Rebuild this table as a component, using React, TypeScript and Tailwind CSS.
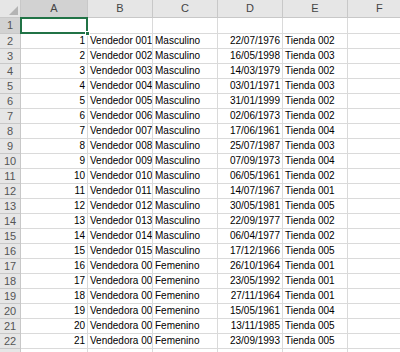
import React from "react";

const rows: [string, string, string, string, string][] = [
  ["1", "Vendedor 001", "Masculino", "22/07/1976", "Tienda 002"],
  ["2", "Vendedor 002", "Masculino", "16/05/1998", "Tienda 003"],
  ["3", "Vendedor 003", "Masculino", "14/03/1979", "Tienda 002"],
  ["4", "Vendedor 004", "Masculino", "03/01/1971", "Tienda 003"],
  ["5", "Vendedor 005", "Masculino", "31/01/1999", "Tienda 002"],
  ["6", "Vendedor 006", "Masculino", "02/06/1973", "Tienda 002"],
  ["7", "Vendedor 007", "Masculino", "17/06/1961", "Tienda 004"],
  ["8", "Vendedor 008", "Masculino", "25/07/1987", "Tienda 003"],
  ["9", "Vendedor 009", "Masculino", "07/09/1973", "Tienda 004"],
  ["10", "Vendedor 010", "Masculino", "06/05/1961", "Tienda 002"],
  ["11", "Vendedor 011", "Masculino", "14/07/1967", "Tienda 001"],
  ["12", "Vendedor 012", "Masculino", "30/05/1981", "Tienda 005"],
  ["13", "Vendedor 013", "Masculino", "22/09/1977", "Tienda 002"],
  ["14", "Vendedor 014", "Masculino", "06/04/1977", "Tienda 002"],
  ["15", "Vendedor 015", "Masculino", "17/12/1966", "Tienda 005"],
  ["16", "Vendedora 001", "Femenino", "26/10/1964", "Tienda 001"],
  ["17", "Vendedora 002", "Femenino", "23/05/1992", "Tienda 001"],
  ["18", "Vendedora 003", "Femenino", "27/11/1964", "Tienda 001"],
  ["19", "Vendedora 004", "Femenino", "15/05/1961", "Tienda 004"],
  ["20", "Vendedora 005", "Femenino", "13/11/1985", "Tienda 005"],
  ["21", "Vendedora 006", "Femenino", "23/09/1993", "Tienda 005"],
];

const grid = "grid grid-cols-[21px_67px_65px_65px_65px_65px_52px]";
const cell = "border-r border-b border-[#dadada] overflow-hidden whitespace-nowrap flex items-end pb-[2px] leading-none";
const lastCell = "border-b border-[#dadada] overflow-hidden";
const rh = "border-r border-b border-[#c8c8c8] bg-[#e6e6e6] text-[#555] flex items-center justify-center leading-none";

export default function App() {
  const letters = ["A", "B", "C", "D", "E"];
  return (
    <div
      className="w-[400px] h-[352px] overflow-hidden bg-white text-[10px] text-black"
      style={{ fontFamily: '"Liberation Sans", Arial, sans-serif' }}
    >
      {/* header */}
      <div className={`${grid} h-[18px]`}>
        <div className="relative border-r border-b border-[#c8c8c8] bg-[#e6e6e6]">
          <svg className="absolute right-[2px] bottom-[2px]" width="9" height="9" viewBox="0 0 9 9">
            <polygon points="9,0 9,9 0,9" fill="#b4b4b4" />
          </svg>
        </div>
        {letters.map((l, i) => (
          <div
            key={l}
            className={`border-r border-b border-[#c8c8c8] flex items-center justify-center text-[11px] leading-none text-[#444] ${
              i === 0 ? "bg-[#d2d2d2]" : "bg-[#e6e6e6]"
            }`}
          >
            {l}
          </div>
        ))}
        <div className="border-b border-[#c8c8c8] bg-[#e6e6e6] flex items-center justify-start pl-[28px] text-[11px] leading-none text-[#444]">
          F
        </div>
      </div>
      {/* row 1 */}
      <div className={`${grid} h-[16px]`}>
        <div className={`${rh} !bg-[#d2d2d2]`}>
          <span className="text-[11px]">1</span>
        </div>
        <div className={`${cell} relative overflow-visible`}>
          <div className="absolute left-[-1px] top-[-1px] right-[-1px] bottom-[-1px] border-2 border-[#217346]" />
          <div className="absolute right-[-3px] bottom-[-3px] w-[5px] h-[5px] bg-[#217346] border border-white" />
        </div>
        {[0, 1, 2, 3].map((k) => (
          <div key={k} className={cell} />
        ))}
        <div className={lastCell} />
      </div>
      {rows.map((r, idx) => (
        <div key={idx} className={`${grid} h-[15px]`}>
          <div className={rh}>
            <span className="text-[11px]">{idx + 2}</span>
          </div>
          <div className={`${cell} justify-end pr-[2px]`}>{r[0]}</div>
          <div className={`${cell} pl-[2px]`}>{r[1]}</div>
          <div className={`${cell} pl-[2px]`}>{r[2]}</div>
          <div className={`${cell} justify-end pr-[2px]`}>{r[3]}</div>
          <div className={`${cell} pl-[2px]`}>{r[4]}</div>
          <div className={lastCell} />
        </div>
      ))}
      <div className={`${grid} h-[15px]`}>
        <div className={rh}>
          <span className="text-[11px]">23</span>
        </div>
        {[0, 1, 2, 3, 4].map((k) => (
          <div key={k} className={cell} />
        ))}
        <div className={lastCell} />
      </div>
    </div>
  );
}
